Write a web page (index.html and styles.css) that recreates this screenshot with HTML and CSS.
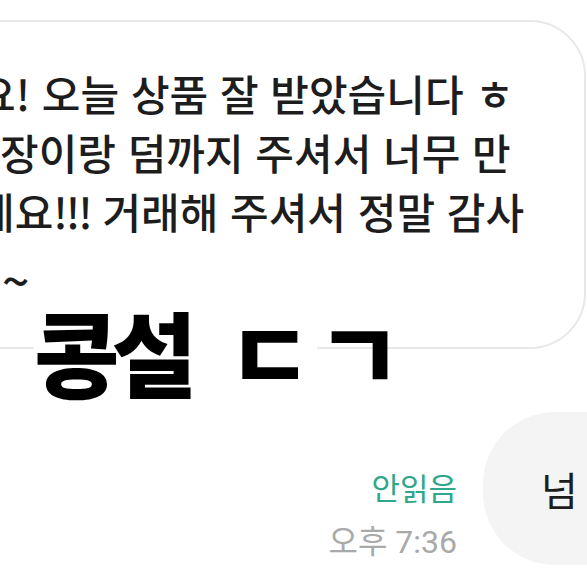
FILE: index.html
```html
<!DOCTYPE html>
<html lang="ko">
<head>
<meta charset="utf-8">
<link rel="stylesheet" href="styles.css">
</head>
<body>
<div class="chat">
  <div class="bubble">
    <div class="line l1">요! 오늘 상품 잘 받았습니다 ㅎ</div>
    <div class="line l2">장이랑 덤까지 주셔서 너무 만</div>
    <div class="line l3">네요<span class="bang">!!!</span> 거래해 주셔서 정말 감사</div>
    <div class="line l4">~</div>
  </div>
  <div class="row">
    <div class="meta">
      <span class="unread">안읽음</span>
      <span class="time">오후 7:36</span>
    </div>
    <div class="mine">넘</div>
  </div>
</div>
<div class="caption"><span class="mask">콩설 <span class="jamo">ㄷ</span></span>ㄱ</div>
</body>
</html>
```

FILE: styles.css
```css
html, body {
  margin: 0;
  padding: 0;
}
body {
  width: 587px;
  height: 587px;
  overflow: hidden;
  position: relative;
  background: #ffffff;
  font-family: "Noto Sans CJK KR", "Noto Sans", sans-serif;
}
.chat {
  display: flex;
  flex-direction: column;
}
.bubble {
  box-sizing: border-box;
  margin: 20px 0 0 -60px;
  width: 646px;
  height: 329px;
  border: 2px solid #e8e8e8;
  border-radius: 0 56px 56px 0;
  padding: 41px 0 0 60px;
  background: #fff;
  overflow: hidden;
}
.line {
  font-size: 42px;
  line-height: 59px;
  font-weight: 500;
  white-space: nowrap;
  color: #1d1d1d;
}
.l1 { margin-left: -25px; }
.l2 { margin-left: -2px; }
.l3 { margin-left: -26px; }
.l4 {
  margin-left: 0;
  margin-top: 10px;
  font-size: 48px;
}
.bang {
  letter-spacing: -2px;
}
.row {
  display: flex;
  justify-content: flex-end;
  margin-top: 63px;
  margin-right: -60px;
}
.meta {
  display: flex;
  flex-direction: column;
  align-items: flex-end;
  align-self: flex-end;
  margin-right: 26px;
  margin-bottom: -3px;
  font-family: "Roboto", "Noto Sans CJK KR", sans-serif;
  font-size: 32px;
  line-height: 52px;
}
.unread {
  color: #30a78b;
  font-family: "Noto Sans CJK KR", sans-serif;
  font-size: 31px;
  position: relative;
  top: -3px;
}
.time {
  color: #a9a9a9;
}
.mine {
  box-sizing: border-box;
  width: 164px;
  height: 153px;
  border-radius: 72px 0 0 72px;
  background: #f4f4f4;
  display: flex;
  align-items: center;
  padding-left: 58px;
  font-size: 40px;
  color: #1d1d1d;
}
.caption {
  position: absolute;
  left: 34px;
  top: 297px;
  font-size: 93px;
  font-weight: 900;
  line-height: 108px;
  color: #000;
  letter-spacing: -8px;
  word-spacing: 20px;
  white-space: nowrap;
}
.mask {
  background: #fff;
}
.jamo {
  letter-spacing: 4px;
}
```
